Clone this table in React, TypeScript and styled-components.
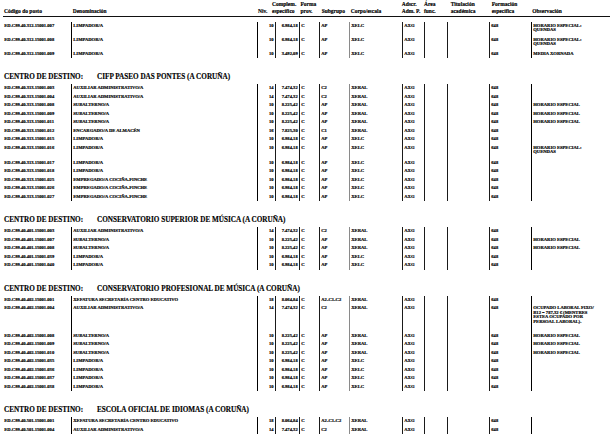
import React from 'react';
import styled, { createGlobalStyle } from 'styled-components';

const GlobalStyle = createGlobalStyle`
  html, body { margin: 0; padding: 0; background: #ffffff; }
  body {
    width: 616px;
    height: 439px;
    overflow: hidden;
    font-family: "Liberation Serif", "Times New Roman", serif;
    color: #000;
  }
`;

const BODY_COLS = '67px 186px 18px 24px 20px 30px 53px 22px 23px 42px 42px 81px';
const HEAD_COLS = '68.7px 185.3px 14px 28.5px 21.2px 29px 51px 22.3px 26.7px 41px 40.6px 79.7px';

const Page = styled.div`
  display: flex;
  flex-direction: column;
  padding: 0 4px 0 4px;
`;

const HeaderRow = styled.div`
  display: grid;
  grid-template-columns: ${HEAD_COLS};
  align-items: end;
  margin-left: -1px;
  padding: 1px 0 1px 1px;
  width: 607px;
  box-sizing: border-box;
  border-bottom: 1px solid #111;
`;

const HeadCell = styled.div`
  font-size: 5.5px;
  line-height: 6.8px;
  font-weight: 700;
  white-space: nowrap;
  -webkit-text-stroke: 0.15px #000;
`;

const Group = styled.div<{ $first?: boolean }>`
  display: flex;
  flex-direction: column;
  margin-top: ${(p) => (p.$first ? 5 : 0)}px;
`;

const Heading = styled.div`
  display: flex;
  margin: 15px 0 3px 0;
  font-size: 7.2px;
  line-height: 8px;
  height: 8px;
  font-weight: 700;
  white-space: nowrap;
  -webkit-text-stroke: 0.15px #000;
`;

const HeadingLabel = styled.span`
  width: 93px;
  flex: none;
`;

const Row = styled.div<{ $tall?: boolean; $extra: number }>`
  display: grid;
  grid-template-columns: ${BODY_COLS};
  min-height: ${(p) => (p.$tall ? 14 : 8.5)}px;
  padding-bottom: ${(p) => p.$extra}px;
  box-sizing: content-box;
`;

type Rule = 'none' | 'dark' | 'heavy' | 'gray';

const ruleStyle: Record<Rule, string> = {
  none: 'none',
  dark: '1px solid #1a1a1a',
  heavy: '1.5px solid #000',
  gray: '1.5px solid #8a8a8a',
};

const Cell = styled.div<{ $rule: Rule; $align?: 'left' | 'right'; $pl?: number; $pr?: number }>`
  box-sizing: border-box;
  border-left: ${(p) => ruleStyle[p.$rule]};
  margin-bottom: ${(p) => (p.$rule === 'none' ? 0 : 0)}px;
  padding-top: 2px;
  padding-left: ${(p) => p.$pl ?? 1.3}px;
  padding-right: ${(p) => p.$pr ?? 0}px;
  text-align: ${(p) => p.$align ?? 'left'};
  font-size: 4.6px;
  line-height: 4.6px;
  font-weight: 700;
  white-space: nowrap;
  -webkit-text-stroke: 0.18px #000;
`;

const RowWrap = styled.div<{ $extra: number }>`
  display: grid;
  grid-template-columns: ${BODY_COLS};
  height: ${(p) => p.$extra}px;
`;

const Spacer = styled.div<{ $rule: Rule }>`
  border-left: ${(p) => ruleStyle[p.$rule]};
`;

type Rec = {
  code: string;
  den: string;
  niv: string;
  comp: string;
  sub: string;
  corpo: string;
  obs?: string[];
};

type Grp = { title?: string; tall?: boolean; rows: Rec[] };

const HE = ['HORARIO ESPECIAL'];
const HQ = ['HORARIO ESPECIAL:', 'QUENDAS'];

const limp = (code: string, obs?: string[]): Rec => ({ code, den: 'LIMPADOR/A', niv: '10', comp: '6.984,18', sub: 'AP', corpo: 'XELC', obs });
const sub = (code: string, obs?: string[]): Rec => ({ code, den: 'SUBALTERNO/A', niv: '10', comp: '8.225,42', sub: 'AP', corpo: 'XERAL', obs });
const aux = (code: string, obs?: string[]): Rec => ({ code, den: 'AUXILIAR ADMINISTRATIVO/A', niv: '14', comp: '7.474,32', sub: 'C2', corpo: 'XERAL', obs });
const emp = (code: string): Rec => ({ code, den: 'EMPREGADO/A COCIÑA-FINCHE', niv: '10', comp: '6.984,18', sub: 'AP', corpo: 'XELC' });
const xef = (code: string): Rec => ({ code, den: 'XEFATURA SECRETARÍA CENTRO EDUCATIVO', niv: '18', comp: '8.064,84', sub: 'A2-C1-C2', corpo: 'XERAL' });

const groups: Grp[] = [
  {
    tall: true,
    rows: [
      limp('ED.C99.40.312.15001.007', HQ),
      limp('ED.C99.40.312.15001.008', HQ),
      { ...limp('ED.C99.40.312.15001.009', ['MEDIA XORNADA']), comp: '3.492,09' },
    ],
  },
  {
    title: 'CIFP PASEO DAS PONTES (A CORUÑA)',
    rows: [
      aux('ED.C99.40.313.15001.003'),
      aux('ED.C99.40.313.15001.004'),
      sub('ED.C99.40.313.15001.008', HE),
      sub('ED.C99.40.313.15001.009', HE),
      sub('ED.C99.40.313.15001.011', HE),
      { code: 'ED.C99.40.313.15001.012', den: 'ENCARGADO/A DE ALMACÉN', niv: '16', comp: '7.825,30', sub: 'C1', corpo: 'XERAL' },
      limp('ED.C99.40.313.15001.015'),
      limp('ED.C99.40.313.15001.016', HQ),
      limp('ED.C99.40.313.15001.017'),
      limp('ED.C99.40.313.15001.018'),
      emp('ED.C99.40.313.15001.025'),
      emp('ED.C99.40.313.15001.026'),
      emp('ED.C99.40.313.15001.027'),
    ],
  },
  {
    title: 'CONSERVATORIO SUPERIOR DE MÚSICA (A CORUÑA)',
    rows: [
      aux('ED.C99.40.401.15001.003'),
      sub('ED.C99.40.401.15001.007', HE),
      sub('ED.C99.40.401.15001.008', HE),
      limp('ED.C99.40.401.15001.039'),
      limp('ED.C99.40.401.15001.040'),
    ],
  },
  {
    title: 'CONSERVATORIO PROFESIONAL DE MÚSICA (A CORUÑA)',
    rows: [
      xef('ED.C99.40.402.15001.001'),
      aux('ED.C99.40.402.15001.004', [
        'OCUPADO LABORAL FIXO/',
        'B12 = 787,32 € (MENTRES',
        'ESTEA OCUPADO POR',
        'PERSOAL LABORAL).',
      ]),
      sub('ED.C99.40.402.15001.008', HE),
      sub('ED.C99.40.402.15001.009', HE),
      sub('ED.C99.40.402.15001.010', HE),
      limp('ED.C99.40.402.15001.035'),
      limp('ED.C99.40.402.15001.036'),
      limp('ED.C99.40.402.15001.037'),
      limp('ED.C99.40.402.15001.038'),
    ],
  },
  {
    title: 'ESCOLA OFICIAL DE IDIOMAS (A CORUÑA)',
    rows: [xef('ED.C99.40.501.15001.001'), aux('ED.C99.40.501.15001.004')],
  },
];

const headers: { top?: string; bottom: string }[] = [
  { bottom: 'Código do posto' },
  { bottom: 'Denominación' },
  { bottom: 'Niv.' },
  { top: 'Complem.', bottom: 'específico' },
  { top: 'Forma', bottom: 'prov.' },
  { bottom: 'Subgrupo' },
  { bottom: 'Corpo/escala' },
  { top: 'Adscr.', bottom: 'Adm. P.' },
  { top: 'Área', bottom: 'func.' },
  { top: 'Titulación', bottom: 'académica' },
  { top: 'Formación', bottom: 'específica' },
  { bottom: 'Observación' },
];

const RULES: Rule[] = ['none', 'heavy', 'heavy', 'dark', 'dark', 'dark', 'gray', 'dark', 'dark', 'dark', 'dark', 'heavy'];

const DataRow: React.FC<{ r: Rec; tall?: boolean }> = ({ r, tall }) => {
  const lines = r.obs?.length ?? 0;
  const extra = tall ? 0 : lines >= 4 ? 7 : lines >= 2 ? 4 : 0;
  return (
    <>
      <Row $tall={tall} $extra={0}>
        <Cell $rule="none" $pl={0.3}>{r.code}</Cell>
        <Cell $rule="heavy">{r.den}</Cell>
        <Cell $rule="heavy" $pl={11}>{r.niv}</Cell>
        <Cell $rule="dark" $align="right" $pr={1.3}>{r.comp}</Cell>
        <Cell $rule="dark">C</Cell>
        <Cell $rule="dark">{r.sub}</Cell>
        <Cell $rule="gray">{r.corpo}</Cell>
        <Cell $rule="dark">AXG</Cell>
        <Cell $rule="dark" />
        <Cell $rule="dark" />
        <Cell $rule="dark">648</Cell>
        <Cell $rule="heavy">
          {(r.obs ?? []).map((l, i) => (
            <div key={i}>{l}</div>
          ))}
        </Cell>
      </Row>
      {extra > 0 && (
        <RowWrap $extra={extra}>
          {RULES.map((rule, i) => (
            <Spacer key={i} $rule={rule} />
          ))}
        </RowWrap>
      )}
    </>
  );
};

export default function App() {
  return (
    <>
      <GlobalStyle />
      <Page>
        <HeaderRow>
          {headers.map((h, i) => (
            <HeadCell key={i}>
              {h.top && <div>{h.top}</div>}
              <div>{h.bottom}</div>
            </HeadCell>
          ))}
        </HeaderRow>
        {groups.map((g, gi) => (
          <React.Fragment key={gi}>
            {g.title && (
              <Heading>
                <HeadingLabel>CENTRO DE DESTINO:</HeadingLabel>
                <span>{g.title}</span>
              </Heading>
            )}
            <Group $first={gi === 0}>
              {g.rows.map((r, ri) => (
                <DataRow key={ri} r={r} tall={g.tall && ri < 2} />
              ))}
            </Group>
          </React.Fragment>
        ))}
      </Page>
    </>
  );
}
